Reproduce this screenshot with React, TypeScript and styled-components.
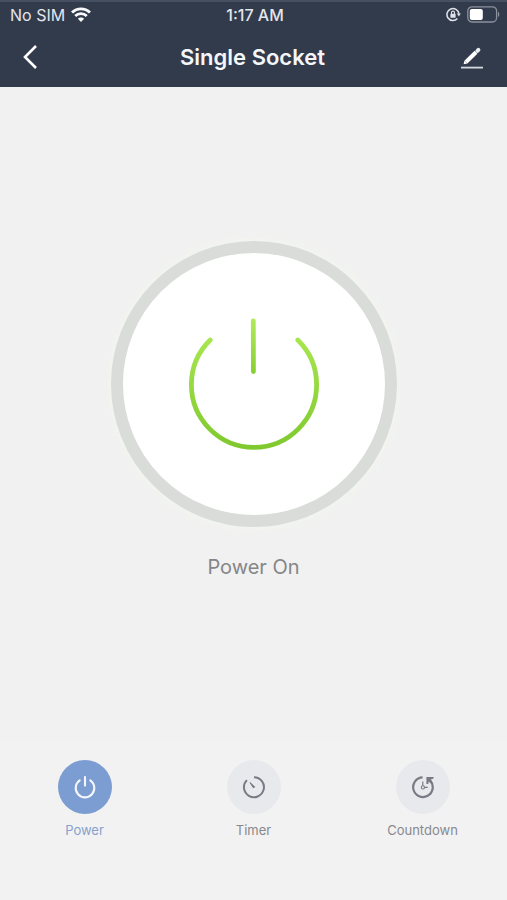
import React, { useState } from "react";
import styled, { createGlobalStyle } from "styled-components";

const GlobalStyle = createGlobalStyle`
  *, *::before, *::after { box-sizing: border-box; }
  body { margin: 0; background: #f1f1f1; font-family: Inter, Roboto, sans-serif; }
  button { font: inherit; color: inherit; background: none; border: 0; padding: 0; cursor: pointer; }
  svg { display: block; }
`;

const Screen = styled.div`
  display: flex;
  flex-direction: column;
  min-height: 100vh;
  background: #f1f1f1;
`;

const Header = styled.header`
  background: #323b4c;
  border-top: 2px solid #455063;
  color: #f4f6f9;
`;

const StatusBar = styled.div`
  display: grid;
  grid-template-columns: 1fr auto 1fr;
  align-items: center;
  height: 25px;
  padding: 0 7px 0 10px;
  font-size: 16px;
  line-height: 20px;
  color: #e3e6eb;
`;

const StatusGroup = styled.div<{ $end?: boolean }>`
  display: flex;
  align-items: center;
  gap: 6px;
  justify-content: ${(p) => (p.$end ? "flex-end" : "flex-start")};
`;

const Clock = styled.time`
  font-weight: 500;
`;

const NavBar = styled.nav`
  display: grid;
  grid-template-columns: 1fr auto 1fr;
  align-items: center;
  height: 60px;
  padding: 0 22px 0 20px;
`;

const NavButton = styled.button<{ $end?: boolean }>`
  justify-self: ${(p) => (p.$end ? "end" : "start")};
`;

const Title = styled.h1`
  margin: 0;
  font-size: 22px;
  line-height: 28px;
  font-weight: 600;
`;

const Main = styled.main`
  flex: 1;
  display: flex;
  flex-direction: column;
  align-items: center;
  padding-top: 154px;
`;

const PowerButton = styled.button`
  display: flex;
  align-items: center;
  justify-content: center;
  width: 286px;
  height: 286px;
  && {
    border: 12px solid #d9dcd9;
    background: #fefffe;
  }
  border-radius: 50%;
  box-shadow: 0 0 8px 2px #f3f6ef;
`;

const StateText = styled.p`
  margin: 26px 0;
  font-size: 20px;
  line-height: 28px;
  color: #858688;
`;

const TabBar = styled.footer`
  display: grid;
  grid-template-columns: repeat(3, 1fr);
  padding: 19px 0 60px;
  background: #f2f2f2;
`;

const Tab = styled.button<{ $active: boolean }>`
  display: flex;
  flex-direction: column;
  align-items: center;
  gap: 6px;
  && {
    font-size: 13px;
    line-height: 20px;
    color: ${(p) => (p.$active ? "#86a0cd" : "#88898d")};
  }
`;

const TabDisc = styled.span<{ $active: boolean }>`
  display: flex;
  align-items: center;
  justify-content: center;
  width: 54px;
  height: 54px;
  border-radius: 50%;
  background: ${(p) => (p.$active ? "#7b9dd2" : "#e8e9ed")};
  color: ${(p) => (p.$active ? "#f3f7fd" : "#797b84")};
`;

const WifiIcon = () => (
  <svg width="20" height="16" viewBox="0 0 20 16" fill="none" stroke="#f7f9fb" strokeWidth="2.8" aria-label="Wi-Fi">
    <path d="M1 5.6C6 .6 14 .6 19 5.6" />
    <path d="M4.2 9C7.4 5.8 12.6 5.8 15.8 9" />
    <path d="M6.9 11.8C8.6 10 11.4 10 13.1 11.8L10 15Z" fill="#f7f9fb" stroke="none" />
  </svg>
);

const RotationLockIcon = () => (
  <svg width="15" height="15" viewBox="0 0 15 15" fill="none" stroke="#dfe3e8" strokeWidth="1.5" aria-label="Rotation lock">
    <path d="M11.4 11.6A6 6 0 1 1 12.9 6.6" />
    <path d="M10.8 6.6H14.8L12.9 9.4Z" fill="#dfe3e8" stroke="none" />
    <rect x="4.4" y="6.8" width="5.2" height="4" rx=".6" fill="#dfe3e8" stroke="none" />
    <path d="M5.5 7V5.6a1.5 1.5 0 0 1 3 0V7" strokeWidth="1.1" />
  </svg>
);

const BatteryIcon = () => (
  <svg width="33" height="17" viewBox="0 0 33 17" fill="none" aria-label="Battery">
    <rect x=".8" y=".8" width="28.8" height="15.2" rx="4.2" stroke="#8b929e" strokeWidth="1.3" />
    <rect x="2.8" y="3" width="13" height="11" rx="2" fill="#fff" />
    <path d="M31 5.8c1.7.7 1.7 4.5 0 5.2Z" fill="#8b929e" />
  </svg>
);

const BackIcon = () => (
  <svg width="20" height="26" viewBox="0 0 20 26" fill="none" stroke="#fff" strokeWidth="2.6">
    <path d="M16 2L5 13L16 24" />
  </svg>
);

const EditIcon = () => (
  <svg width="26" height="24" viewBox="0 0 26 24" fill="none">
    <path d="M7 17L17 7.2" stroke="#fff" strokeWidth="4" />
    <path d="M4.6 19.3L5.4 15.6L8.4 18.5Z" fill="#fff" />
    <path d="M18.4 5.8L19.4 4.8" stroke="#e9eef5" strokeWidth="4" strokeLinecap="round" />
    <path d="M2 22.6H24" stroke="#d5d9df" strokeWidth="1.8" />
  </svg>
);

const PowerIcon = () => (
  <svg width="134" height="134" viewBox="0 0 134 134" fill="none" stroke="url(#power-green)" strokeWidth="4.8" strokeLinecap="round">
    <defs>
      <linearGradient id="power-green" gradientUnits="userSpaceOnUse" x1="0" y1="22" x2="0" y2="131">
        <stop offset="0" stopColor="#a8e54e" />
        <stop offset="1" stopColor="#7fc92f" />
      </linearGradient>
      <linearGradient id="power-stem" gradientUnits="userSpaceOnUse" x1="66" y1="3" x2="66" y2="57">
        <stop offset="0" stopColor="#b0e95a" />
        <stop offset="1" stopColor="#87cf32" />
      </linearGradient>
    </defs>
    <path d="M23.2 23A62.6 62.6 0 1 0 110.8 23" />
    <path d="M66.3 4L66.4 54.5" stroke="url(#power-stem)" />
  </svg>
);

const SmallPowerIcon = () => (
  <svg width="24" height="24" viewBox="0 0 24 24" fill="none" stroke="currentColor" strokeWidth="2.1" strokeLinecap="round">
    <path d="M6.7 5.4A9.3 9.3 0 1 0 17.3 5.4" />
    <path d="M12 2V10.6" />
  </svg>
);

const TimerIcon = () => (
  <svg width="24" height="24" viewBox="0 0 24 24" fill="none" stroke="currentColor" strokeWidth="2">
    <path d="M12 2.2A10 10 0 1 1 4.9 5.1" />
    <path d="M8 7.6L12.7 11.8L11.5 13Z" fill="currentColor" strokeWidth="1" strokeLinejoin="round" />
  </svg>
);

const CountdownIcon = () => (
  <svg width="24" height="24" viewBox="0 0 24 24" fill="none" stroke="currentColor" strokeWidth="2.2">
    <path d="M11.6 2.4A9.8 9.8 0 1 0 19.2 5.6" />
    <path d="M15.4 2H22.6V3.6L19.8 4.6L21.4 7.4L19.6 8.6L17.8 6.4L17.2 9H15.4Z" fill="currentColor" stroke="none" />
    <path d="M11.8 6.4V10.8M13.4 12.4H16.8" strokeWidth="1.2" />
    <circle cx="11.9" cy="12.4" r="1.6" strokeWidth="1.1" />
  </svg>
);

const tabs = [
  { label: "Power", Icon: SmallPowerIcon },
  { label: "Timer", Icon: TimerIcon },
  { label: "Countdown", Icon: CountdownIcon },
];

export default function App() {
  const [on, setOn] = useState(true);
  const [active, setActive] = useState("Power");

  return (
    <>
      <GlobalStyle />
      <Screen>
        <Header>
          <StatusBar>
            <StatusGroup>
              <span>No SIM</span>
              <WifiIcon />
            </StatusGroup>
            <Clock>1:17 AM</Clock>
            <StatusGroup $end>
              <RotationLockIcon />
              <BatteryIcon />
            </StatusGroup>
          </StatusBar>
          <NavBar>
            <NavButton type="button" aria-label="Back">
              <BackIcon />
            </NavButton>
            <Title>Single Socket</Title>
            <NavButton type="button" aria-label="Edit" $end>
              <EditIcon />
            </NavButton>
          </NavBar>
        </Header>
        <Main>
          <PowerButton type="button" aria-label="Toggle power" aria-pressed={on} onClick={() => setOn(!on)}>
            <PowerIcon />
          </PowerButton>
          <StateText>{on ? "Power On" : "Power Off"}</StateText>
        </Main>
        <TabBar>
          {tabs.map(({ label, Icon }) => (
            <Tab key={label} type="button" $active={active === label} onClick={() => setActive(label)}>
              <TabDisc $active={active === label}>
                <Icon />
              </TabDisc>
              {label}
            </Tab>
          ))}
        </TabBar>
      </Screen>
    </>
  );
}
